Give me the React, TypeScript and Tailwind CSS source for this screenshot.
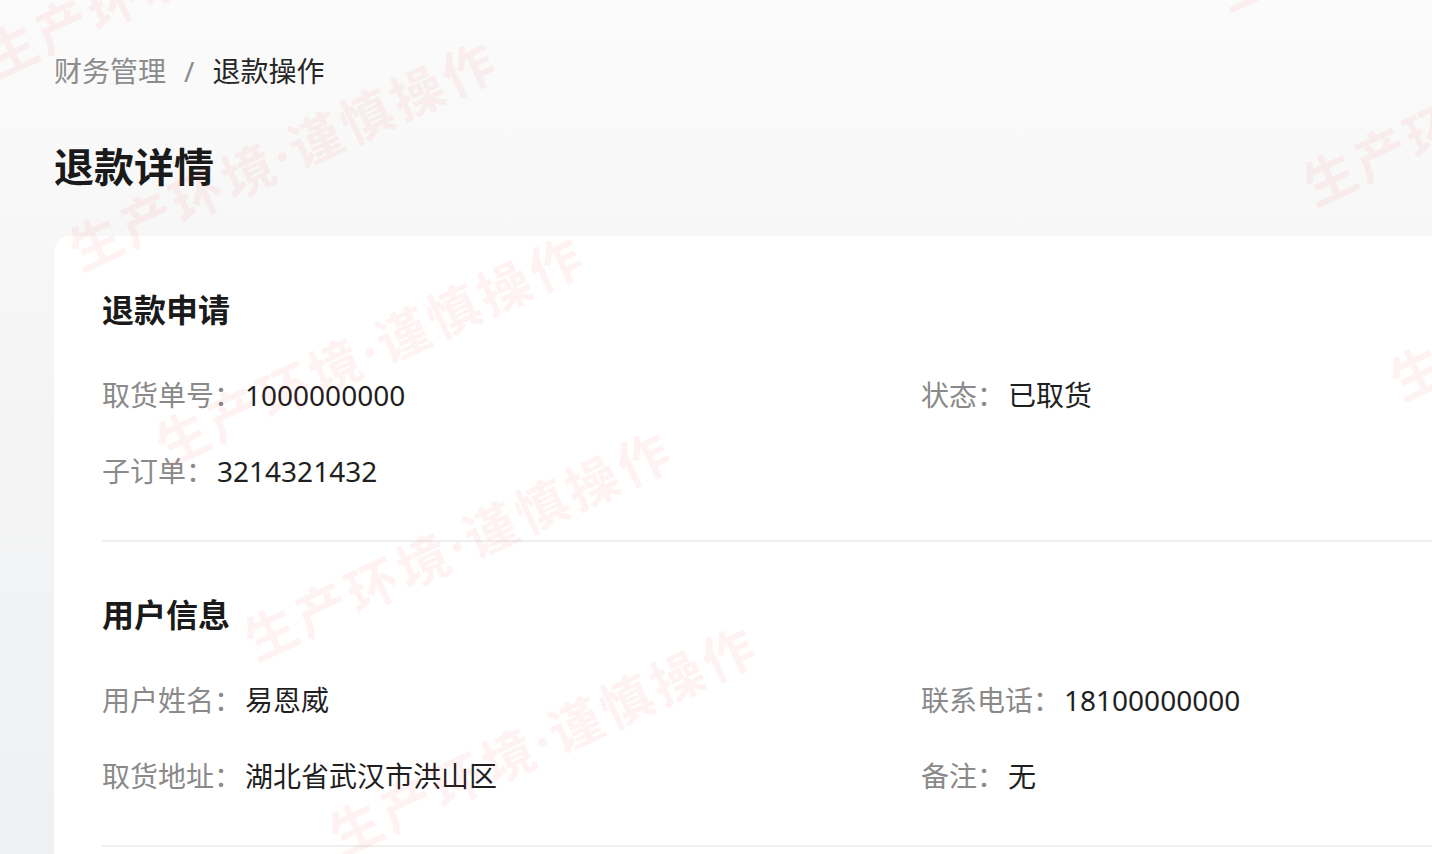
import React from "react";

function WMText() {
  return (
    <>
      生产环境<span className="font-['Noto_Sans',sans-serif]">·</span>谨慎操作
    </>
  );
}

function Watermarks() {
  const cls =
    "absolute whitespace-nowrap text-[52px] leading-none font-bold tracking-[4px] text-[rgba(230,40,40,0.06)] origin-bottom-left -rotate-[25deg] font-['Noto_Sans_CJK_SC',sans-serif]";
  return (
    <div className="pointer-events-none absolute inset-0 z-10">
      <span className={`${cls} left-[-2px] top-[30px]`}><WMText /></span>
      <span className={`${cls} left-[83px] top-[223px]`}><WMText /></span>
      <span className={`${cls} left-[170px] top-[418px]`}><WMText /></span>
      <span className={`${cls} left-[258px] top-[613px]`}><WMText /></span>
      <span className={`${cls} left-[343px] top-[808px]`}><WMText /></span>
      <span className={`${cls} left-[1230px] top-[-37px]`}><WMText /></span>
      <span className={`${cls} left-[1317px] top-[158px]`}><WMText /></span>
      <span className={`${cls} left-[1404px] top-[353px]`}><WMText /></span>
    </div>
  );
}

function Field({ label, value }: { label: string; value: string }) {
  return (
    <div className="flex items-center text-[28px] leading-[42px]">
      <span className="text-[#8a8a8a]">{label}：</span>
      <span className="ml-[3px] text-[#1f1f1f]">{value}</span>
    </div>
  );
}

function Section({
  title,
  rows,
  first,
}: {
  title: string;
  rows: [string, string][];
  first?: boolean;
}) {
  return (
    <div
      className={`${first ? "pt-[50px]" : "pt-[49px]"} pb-[48px] border-b-2 border-[#efefef]`}
    >
      <div className="text-[32px] leading-[48px] font-bold text-[#1a1a1a]">{title}</div>
      <div className="mt-[40px] grid grid-cols-[819px_1fr] gap-y-[34px]">
        {rows.map(([l, v], i) =>
          l ? <Field key={i} label={l} value={v} /> : <div key={i} />
        )}
      </div>
    </div>
  );
}

export default function App() {
  return (
    <div className="relative h-[854px] w-full overflow-hidden bg-gradient-to-b from-[#fbfbfb] via-[#f4f4f4] to-[#eef1f4] font-['Noto_Sans','Noto_Sans_CJK_SC',sans-serif]">
      <div className="pl-[54px] pt-[50px]">
        <div className="flex items-center text-[28px] leading-[42px]">
          <span className="text-[#8c8c8c]">财务管理</span>
          <span className="px-[18px] text-[#8c8c8c]">/</span>
          <span className="text-[#262626]">退款操作</span>
        </div>
        <h1 className="mt-[47px] text-[40px] leading-[56px] font-bold text-[#1a1a1a]">退款详情</h1>
        <div className="mt-[41px] w-[1500px] min-h-[700px] rounded-tl-[16px] bg-white px-[48px]">
          <Section
            first
            title="退款申请"
            rows={[
              ["取货单号", "1000000000"],
              ["状态", "已取货"],
              ["子订单", "3214321432"],
              ["", ""],
            ]}
          />
          <Section
            title="用户信息"
            rows={[
              ["用户姓名", "易恩威"],
              ["联系电话", "18100000000"],
              ["取货地址", "湖北省武汉市洪山区"],
              ["备注", "无"],
            ]}
          />
        </div>
      </div>
      <Watermarks />
    </div>
  );
}
